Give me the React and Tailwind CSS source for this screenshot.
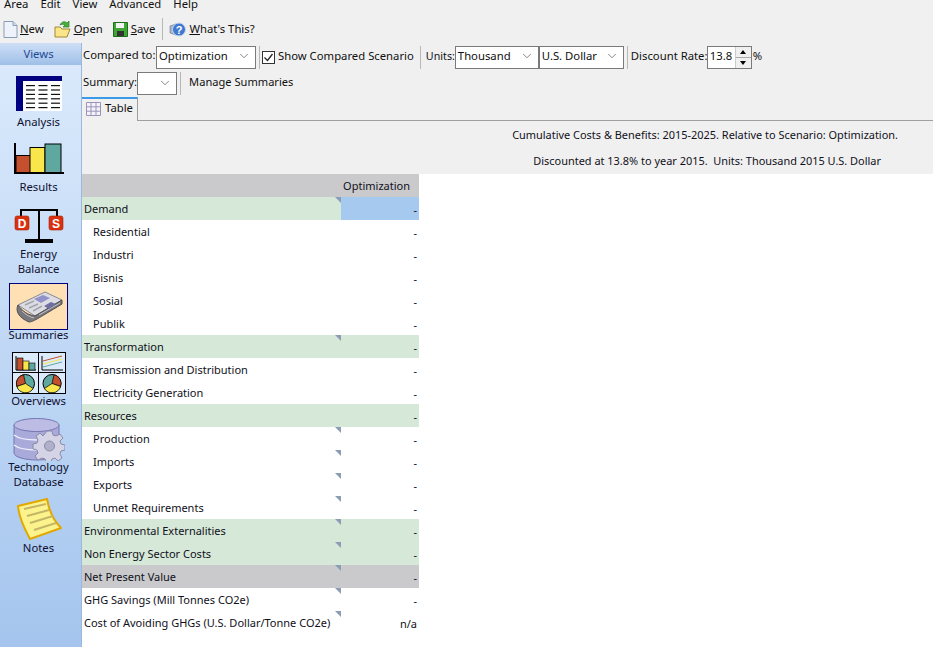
import { ChevronDown } from 'lucide-react'

const rows = [
  { label: 'Demand', kind: 'green', mark: true, selected: true },
  { label: 'Residential', kind: 'sub' },
  { label: 'Industri', kind: 'sub' },
  { label: 'Bisnis', kind: 'sub' },
  { label: 'Sosial', kind: 'sub' },
  { label: 'Publik', kind: 'sub' },
  { label: 'Transformation', kind: 'green', mark: true },
  { label: 'Transmission and Distribution', kind: 'sub' },
  { label: 'Electricity Generation', kind: 'sub' },
  { label: 'Resources', kind: 'green' },
  { label: 'Production', kind: 'sub', mark: true },
  { label: 'Imports', kind: 'sub', mark: true },
  { label: 'Exports', kind: 'sub', mark: true },
  { label: 'Unmet Requirements', kind: 'sub', mark: true },
  { label: 'Environmental Externalities', kind: 'green', mark: true },
  { label: 'Non Energy Sector Costs', kind: 'green', mark: true },
  { label: 'Net Present Value', kind: 'gray', mark: true },
  { label: 'GHG Savings (Mill Tonnes CO2e)', kind: 'plain', mark: true },
  { label: 'Cost of Avoiding GHGs (U.S. Dollar/Tonne CO2e)', kind: 'plain', mark: true, value: 'n/a' },
]

function AnalysisIcon() {
  const lines = []
  for (let r = 0; r < 6; r++) {
    for (let c = 0; c < 3; c++) {
      lines.push(<rect key={r + '-' + c} x={10 + c * 12.5} y={9 + r * 4.4} width={9} height={1.2} fill="#111" />)
    }
  }
  return (
    <svg width="46" height="35" viewBox="0 0 46 35">
      <rect width="46" height="35" fill="#fff" />
      <path d="M0 0H46V5H7V35H0Z" fill="#000080" />
      {lines}
    </svg>
  )
}

function ResultsIcon() {
  return (
    <svg width="50" height="31" viewBox="0 0 50 31">
      <rect x="2" y="12.5" width="15" height="17" fill="#c4502e" stroke="#000" />
      <rect x="16" y="4.5" width="15" height="25" fill="#f8e64a" stroke="#000" />
      <rect x="31" y="1" width="16" height="28.5" fill="#5fa8a0" stroke="#000" />
      <path d="M1 0V30H50" fill="none" stroke="#000" strokeWidth="2" />
    </svg>
  )
}

function BalanceIcon() {
  return (
    <svg width="50" height="37" viewBox="0 0 50 37">
      <path d="M7 9V2H43V9M25 2V31" fill="none" stroke="#000" strokeWidth="2" />
      <rect x="11" y="31" width="28" height="4" fill="#000" />
      <rect x="1" y="8" width="14" height="14" rx="2" fill="#d9310f" stroke="#a8240a" strokeWidth="0.6" />
      <rect x="35" y="8" width="14" height="14" rx="2" fill="#d9310f" stroke="#a8240a" strokeWidth="0.6" />
      <text x="8" y="19.5" textAnchor="middle" fontSize="12" fontWeight="700" fill="#fff" fontFamily="Liberation Sans">D</text>
      <text x="42" y="19.5" textAnchor="middle" fontSize="12" fontWeight="700" fill="#fff" fontFamily="Liberation Sans">S</text>
    </svg>
  )
}

function NewspaperIcon() {
  return (
    <svg width="48" height="32" viewBox="0 0 48 32">
      <path d="M3 14L30 1L47 9L20 25Z" fill="#dcdce4" stroke="#8a8a90" />
      <path d="M3 14C0 20 4 27 14 31C18 31 22 28 47 13L47 9L20 25C13 24 7 20 3 14Z" fill="#77777c" stroke="#4f4f54" />
      <path d="M7 20C11 24 15 26 19 27M24 24L45 12" stroke="#c0c0c6" fill="none" />
      <path d="M19 8L28 4L35 7L26 12Z" fill="#9292c8" />
      <path d="M29 15L36 11L41 13L34 18Z" fill="#6f6fa2" />
      <path d="M10 14L19 10M14 17L23 13M18 20L27 15" stroke="#a4a4ac" strokeWidth="1.5" />
    </svg>
  )
}

function OverviewsIcon() {
  const pie = (x, flip) => (
    <g transform={`translate(${x} 31.5) scale(${flip ? -1 : 1} 1)`}>
      <circle r="9" fill="#5fa8a0" stroke="#000" />
      <path d="M0 0L-2 -8.8A9 9 0 0 0 -8.6 3Z" fill="#c4502e" stroke="#000" strokeWidth="0.7" />
      <path d="M0 0L-8.6 3A9 9 0 0 0 7.6 5Z" fill="#f8e64a" stroke="#000" strokeWidth="0.7" />
    </g>
  )
  return (
    <svg width="54" height="42" viewBox="0 0 54 42">
      <rect x="0.5" y="0.5" width="53" height="41" fill="#dcebfc" stroke="#000" />
      <path d="M26.5 0V42M0 20.5H54" stroke="#000" />
      <path d="M4 4V18H24" fill="none" stroke="#000" />
      <rect x="5" y="6" width="6" height="12" fill="#c4502e" stroke="#000" strokeWidth="0.6" />
      <rect x="11" y="9" width="6" height="9" fill="#f8e64a" stroke="#000" strokeWidth="0.6" />
      <rect x="17" y="11" width="6" height="7" fill="#5fa8a0" stroke="#000" strokeWidth="0.6" />
      <path d="M30 4V18H51" fill="none" stroke="#000" />
      <path d="M31 9L50 4" stroke="#c4502e" fill="none" />
      <path d="M31 12L50 7" stroke="#f8e64a" fill="none" />
      <path d="M31 15L50 10" stroke="#5fa8a0" fill="none" />
      {pie(13.5, false)}
      {pie(40, true)}
    </svg>
  )
}

function DatabaseIcon() {
  return (
    <svg width="52" height="43" viewBox="0 0 52 43">
      <path d="M1 7V35C1 39 12 42 24 42C36 42 46 39 46 35V7Z" fill="#a9a9da" stroke="#7676b0" />
      <ellipse cx="23.5" cy="7" rx="22.5" ry="6.5" fill="#bcbce4" stroke="#7676b0" />
      <path d="M1 17C6 21 16 22 24 22M1 27C6 31 16 32 24 32" stroke="#eef" strokeWidth="1.4" fill="none" />
      <path
        d="M34 13h5l1 4 3 1 4-2 3 4-3 3 1 3 4 1v5l-4 1-1 3 2 4-4 3-3-3-3 1-1 3h-5l-1-3-3-1-4 2-3-4 3-3-1-3-4-1v-5l4-1 1-3-2-4 4-3 3 3z"
        fill="#d4d4e6"
        stroke="#8a8aa8"
      />
      <circle cx="36.5" cy="28" r="5" fill="#b0b0ca" stroke="#8a8aa8" />
    </svg>
  )
}

function NotesIcon() {
  return (
    <svg width="46" height="42" viewBox="0 0 46 42">
      <path d="M2 8L31 1C33 12 37 22 45 30L14 41C8 30 3 20 2 8Z" fill="#fdf38c" stroke="#e0a800" strokeWidth="2" />
      <path d="M8 11L30 6M11 18L33 12M14 25L37 18M18 32L40 25" stroke="#c5b566" strokeWidth="2" />
    </svg>
  )
}

function NavItem({ icon, label, className, labelClass, selected }) {
  return (
    <div className={`flex flex-col items-center ${className}`}>
      {selected ? (
        <div className="flex h-[47px] w-[59px] shrink-0 items-center justify-center border border-[#000080] bg-[#ffdfb4]">
          {icon}
        </div>
      ) : (
        icon
      )}
      <span className={`text-center leading-[15px] text-[#101030] ${labelClass}`}>{label}</span>
    </div>
  )
}

function Select({ value, width }) {
  return (
    <div
      className="flex h-[23px] shrink-0 items-center justify-between border border-[#7a7a7a] bg-white pb-[2px] pl-[2px] pr-[4px] text-[#101010]"
      style={{ width }}
    >
      <span>{value}</span>
      <ChevronDown size={14} strokeWidth={1.2} className="text-[#555]" />
    </div>
  )
}

function Sep({ className = 'mx-[3px]' }) {
  return <div className={`h-[23px] w-px shrink-0 bg-[#b8b8b8] ${className}`} />
}

function Mark() {
  return <div className="absolute right-0 top-0 h-0 w-0 border-l-[6px] border-t-[6px] border-l-transparent border-t-[#8a9db5]" />
}

function TableRow({ row }) {
  const bg = row.kind === 'green' ? 'bg-[#d6e8d8]' : row.kind === 'gray' ? 'bg-[#cacacc]' : 'bg-white'
  return (
    <div className={`flex h-[23px] ${bg}`}>
      <div className={`relative flex w-[259px] items-center whitespace-nowrap ${row.kind === 'sub' ? 'pl-[11px]' : 'pl-[2px]'} pt-[2px] text-[#101020]`}>
        {row.label}
        {row.mark && <Mark />}
      </div>
      <div className={`flex w-[78px] items-end justify-end pb-[2px] pr-[2px] text-[#101020] ${row.selected ? 'bg-[#a6c9ef]' : ''}`}>
        {row.value || '-'}
      </div>
    </div>
  )
}

export default function App() {
  return (
    <div className="flex h-[647px] w-[933px] flex-col overflow-hidden bg-[#f0f0f0] font-['Noto_Sans',sans-serif] text-[11.3px]">
      {/* Menu */}
      <div className="flex h-[12px] items-end gap-[12px] pl-[4px] text-[#101010]">
        {['Area', 'Edit', 'View', 'Advanced', 'Help'].map((m) => (
          <span key={m} className="leading-[16px]">{m}</span>
        ))}
      </div>

      {/* Main toolbar */}
      <div className="flex h-[31px] items-center pl-[3px] pt-[3px] text-[#101010]">
        <svg width="15" height="17" viewBox="0 0 15 17" className="mr-[2px]">
          <path d="M1 .5H10L14 4.5V16.5H1Z" fill="#eef3fb" stroke="#8a9bb5" />
          <path d="M10 .5V4.5H14" fill="#cfdbee" stroke="#8a9bb5" />
        </svg>
        <span className="mr-[10px]"><u>N</u>ew</span>
        <svg width="18" height="18" viewBox="0 0 18 18" className="mr-[2px]">
          <path d="M1 7H6L8 9H16L13 17H1Z" fill="#fbe58a" stroke="#a08a2c" />
          <path d="M6 5C8 1 11 1 13 3L15 1V7H9L11 5C10 4 8 4 6 5Z" fill="#4cae3c" stroke="#2d7d26" strokeWidth="0.7" />
        </svg>
        <span className="mr-[10px]"><u>O</u>pen</span>
        <svg width="15" height="15" viewBox="0 0 15 15" className="mr-[3px]">
          <path d="M.5 .5H14.5V14.5H.5Z" fill="#3fa535" stroke="#1f6d1a" />
          <rect x="3" y="1" width="8" height="5" fill="#f4f4f4" />
          <rect x="4" y="9" width="7" height="5" fill="#333" />
        </svg>
        <span className="mr-[7px]"><u>S</u>ave</span>
        <div className="mr-[6px] h-[22px] w-px bg-[#b8b8b8]" />
        <svg width="17" height="17" viewBox="0 0 17 17" className="mr-[3px]">
          <path d="M1 5L7 3V14L1 12Z" fill="#aab4c8" stroke="#66708a" strokeWidth="0.6" />
          <circle cx="10" cy="8.5" r="6.5" fill="#3f78d0" stroke="#c8d4ea" />
          <text x="10" y="12.5" textAnchor="middle" fontSize="11" fontWeight="700" fill="#fff" fontFamily="Liberation Sans">?</text>
        </svg>
        <span><u>W</u>hat's This?</span>
      </div>

      <div className="flex min-h-0 flex-1">
        {/* Views sidebar */}
        <aside className="flex w-[82px] shrink-0 flex-col border-r border-r-[#9db8da] bg-gradient-to-b from-[#dcebfc] to-[#a5c5ee]">
          <div className="flex h-[22px] items-center justify-center bg-gradient-to-b from-[#cfe0f7] to-[#9fbfe8] pr-[4px] text-[#1f4a96]">
            Views
          </div>
          <div className="flex flex-col pr-[4px] pt-[11px]">
            <NavItem icon={<AnalysisIcon />} label="Analysis" className="h-[67px]" labelClass="mt-[3px]" />
            <NavItem icon={<ResultsIcon />} label="Results" className="h-[65px]" labelClass="mt-[5px]" />
            <NavItem icon={<BalanceIcon />} label={<>Energy<br />Balance</>} className="h-[75px]" labelClass="mt-[1px]" />
            <NavItem icon={<NewspaperIcon />} label="Summaries" className="h-[69px]" labelClass="-mt-[3px]" selected />
            <NavItem icon={<OverviewsIcon />} label="Overviews" className="h-[66px]" labelClass="-mt-[1px]" />
            <NavItem icon={<DatabaseIcon />} label={<>Technology<br />Database</>} className="h-[80px]" labelClass="-mt-[2px]" />
            <NavItem icon={<NotesIcon />} label="Notes" className="h-[60px]" />
          </div>
        </aside>

        <main className="flex min-w-0 flex-1 flex-col">
          {/* Options */}
          <div className="flex h-[26px] items-center pl-[1px] pt-[2px] text-[#101010]">
            <span className="w-[73px] whitespace-nowrap pb-[3px]">Compared to:</span>
            <Select value="Optimization" width={100} />
            <Sep className="ml-[3px] mr-[2px]" />
            <div className="mr-[3px] flex h-[13px] w-[13px] items-center justify-center border border-[#333] bg-white">
              <svg width="11" height="11" viewBox="0 0 11 11"><path d="M1.5 5.5L4.5 8.5L9.5 2" fill="none" stroke="#222" strokeWidth="1.3" /></svg>
            </div>
            <span className="pb-[2px]">Show Compared Scenario</span>
            <Sep className="ml-[6px] mr-[5px]" />
            <span className="w-[29px] whitespace-nowrap pb-[2px] text-[10.7px]">Units:</span>
            <Select value="Thousand" width={84} />
            <Select value="U.S. Dollar" width={85} />
            <Sep />
            <span className="w-[76px] whitespace-nowrap pb-[2px]">Discount Rate:</span>
            <div className="flex h-[23px] w-[45px] items-center justify-between border border-[#7a7a7a] bg-white pl-[2px]">
              <span className="pb-[2px]">13.8</span>
              <div className="flex h-full w-[16px] flex-col border-l border-[#ccc] bg-[#f0f0f0] text-[#111]">
                <div className="flex flex-1 items-center justify-center border-b border-[#aaa]">
                  <div className="h-0 w-0 border-x-[3px] border-b-[4px] border-x-transparent border-b-black" />
                </div>
                <div className="flex flex-1 items-center justify-center">
                  <div className="h-0 w-0 border-x-[3px] border-t-[4px] border-x-transparent border-t-black" />
                </div>
              </div>
            </div>
            <span className="ml-[1px] pb-[2px]">%</span>
          </div>
          <div className="flex h-[28px] items-center pl-[1px] pt-[1px] text-[#101010]">
            <span className="pb-[2px]">Summary:</span>
            <Select value="" width={40} />
            <Sep />
            <span className="ml-[5px] pb-[2px] text-[11.1px]">Manage Summaries</span>
          </div>

          {/* Tab strip */}
          <div className="flex h-[24px]">
            <div className="flex h-[24px] w-[56px] items-center gap-[4px] border-r border-r-[#a0a0a0] border-t-[2px] border-t-[#3c9be8] bg-[#f0f0f0] pb-[3px] pl-[4px] text-[#101010]">
              <svg width="15" height="14" viewBox="0 0 15 14">
                <path d="M.5 .5H14.5V13.5H.5ZM5 .5V13.5M10 .5V13.5M.5 4.8H14.5M.5 9.2H14.5" fill="#f4f2fa" stroke="#9b94b8" />
              </svg>
              <span>Table</span>
            </div>
            <div className="flex-1 border-b border-b-[#a0a0a0]" />
          </div>

          {/* Report title */}
          <div className="flex h-[53px] flex-col items-end pr-[35px] text-[10.95px] text-[#101020]">
            <div className="flex h-[26px] items-center pt-[2px]">Cumulative Costs &amp; Benefits: 2015-2025. Relative to Scenario: Optimization.</div>
            <div className="flex h-[27px] items-center whitespace-pre pr-[17px] pt-[2px]">Discounted at 13.8% to year 2015.  Units: Thousand 2015 U.S. Dollar</div>
          </div>

          {/* Grid */}
          <div className="flex-1 bg-white text-[11px]">
            <div className="w-[337px]">
              <div className="flex h-[23px] items-center justify-end bg-[#cacacc] pr-[9px] pt-[1px] text-[#101020]">Optimization</div>
              {rows.map((r) => (
                <TableRow key={r.label} row={r} />
              ))}
            </div>
          </div>
        </main>
      </div>
    </div>
  )
}
